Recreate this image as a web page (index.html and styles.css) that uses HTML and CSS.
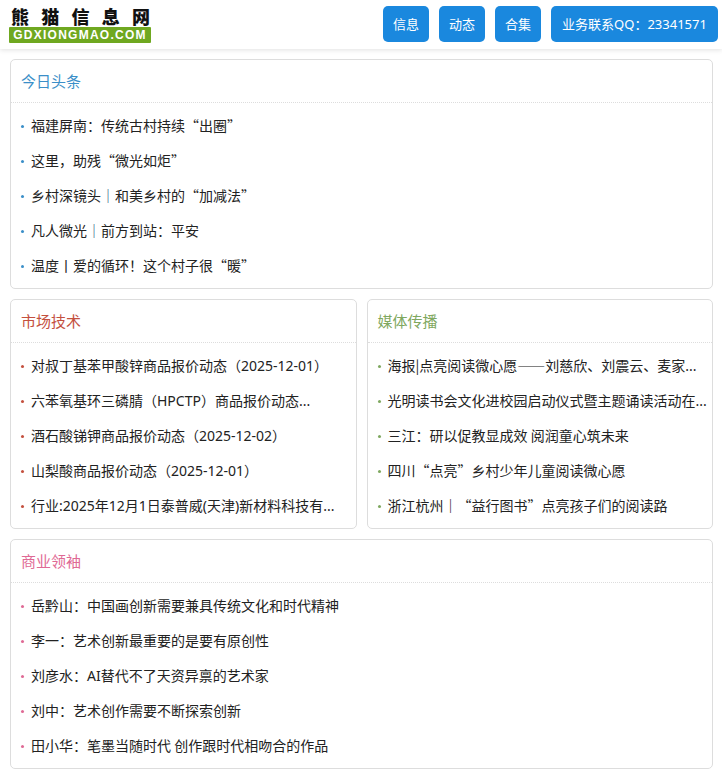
FILE: index.html
```html
<!DOCTYPE html>
<html lang="zh-CN">
<head>
<meta charset="utf-8">
<title>熊猫信息网</title>
<link rel="stylesheet" href="styles.css">
</head>
<body>
<header class="topbar">
  <a class="logo" href="#">
    <span class="logo-cn"><span>熊</span><span>猫</span><span>信</span><span>息</span><span>网</span></span>
    <span class="logo-en">GDXIONGMAO.COM</span>
  </a>
  <nav class="nav">
    <a class="btn" href="#">信息</a>
    <a class="btn" href="#">动态</a>
    <a class="btn" href="#">合集</a>
    <a class="btn btn-wide" href="#">业务联系<span class="la">QQ</span>：<span class="la">23341571</span></a>
  </nav>
</header>
<main class="page">
  <section class="card card-blue">
    <h2 class="card-title">今日头条</h2>
    <ul class="list">
      <li>福建屏南：传统古村持续“出圈”</li>
      <li>这里，助残“微光如炬”</li>
      <li>乡村深镜头<span class="bar">｜</span>和美乡村的“加减法”</li>
      <li>凡人微光<span class="bar">｜</span>前方到站：平安</li>
      <li>温度丨爱的循环！这个村子很“暖”</li>
    </ul>
  </section>
  <div class="row">
    <section class="card card-red">
      <h2 class="card-title">市场技术</h2>
      <ul class="list">
        <li>对叔丁基苯甲酸锌商品报价动态（<span class="la">2025-12-01</span>）</li>
        <li>六苯氧基环三磷腈（<span class="la">HPCTP</span>）商品报价动态<span class="la">...</span></li>
        <li>酒石酸锑钾商品报价动态（<span class="la">2025-12-02</span>）</li>
        <li>山梨酸商品报价动态（<span class="la">2025-12-01</span>）</li>
        <li>行业<span class="la">:2025</span>年<span class="la">12</span>月<span class="la">1</span>日泰普威<span class="la">(</span>天津<span class="la">)</span>新材料科技有<span class="la">...</span></li>
      </ul>
    </section>
    <section class="card card-green">
      <h2 class="card-title">媒体传播</h2>
      <ul class="list">
        <li>海报|点亮阅读微心愿——刘慈欣、刘震云、麦家<span class="la">...</span></li>
        <li>光明读书会文化进校园启动仪式暨主题诵读活动在<span class="la">...</span></li>
        <li>三江：研以促教显成效 阅润童心筑未来</li>
        <li>四川“点亮”乡村少年儿童阅读微心愿</li>
        <li>浙江杭州<span class="bar-dark">｜</span>“益行图书”点亮孩子们的阅读路</li>
      </ul>
    </section>
  </div>
  <section class="card card-pink">
    <h2 class="card-title">商业领袖</h2>
    <ul class="list">
      <li>岳黔山：中国画创新需要兼具传统文化和时代精神</li>
      <li>李一：艺术创新最重要的是要有原创性</li>
      <li>刘彦水：<span class="la">AI</span>替代不了天资异禀的艺术家</li>
      <li>刘中：艺术创作需要不断探索创新</li>
      <li>田小华：笔墨当随时代 创作跟时代相吻合的作品</li>
    </ul>
  </section>
</main>
</body>
</html>
```
FILE: styles.css
```css
* { box-sizing: border-box; }
html, body { margin: 0; padding: 0; }
body {
  background: #fff;
  color: #222;
  font-family: "Noto Sans CJK SC", "Noto Sans", sans-serif;
  font-size: 14px;
}
a { text-decoration: none; color: inherit; }
.la { font-family: "Noto Sans", sans-serif; }
.bar { color: #3f6f8e; font-weight: 900; }
.bar-dark { font-weight: 700; }
.topbar {
  height: 49px;
  display: flex;
  align-items: flex-start;
  justify-content: space-between;
  padding: 6px 4px 0 9px;
  box-shadow: 0 1px 5px rgba(0, 0, 0, .12);
}
.logo { display: flex; flex-direction: column; width: 142px; }
.logo-cn {
  display: flex;
  justify-content: space-between;
  height: 21px;
  padding: 0 1px 0 2px;
  font-size: 18px;
  font-weight: 900;
  line-height: 20px;
  color: #111;
}
.logo-en {
  height: 16px;
  background: #6fa820;
  border-radius: 1px;
  color: #fff;
  font-family: "Liberation Sans", sans-serif;
  font-size: 12px;
  font-weight: 700;
  line-height: 16px;
  letter-spacing: 1.25px;
  text-align: center;
  white-space: nowrap;
  overflow: hidden;
}
.nav { display: flex; gap: 10px; }
.btn {
  width: 46px;
  height: 36px;
  background: #1a88de;
  border-radius: 5px;
  color: #fff;
  font-size: 13px;
  line-height: 36px;
  text-align: center;
  white-space: nowrap;
}
.btn-wide { width: 167px; }
.page {
  display: flex;
  flex-direction: column;
  gap: 10px;
  padding: 10px 9px 0 10px;
}
.row { display: flex; gap: 10px; }
.row .card { flex: 1 1 0; min-width: 0; }
.card {
  height: 230px;
  border: 1px solid #ddd;
  border-radius: 5px;
  overflow: hidden;
}
.card-title {
  height: 43px;
  margin: 0;
  padding: 0 10px;
  border-bottom: 1px dotted #ddd;
  font-size: 15px;
  font-weight: 400;
  line-height: 41px;
}
.card-blue .card-title { color: #3b8fc8; }
.card-red .card-title { color: #c4503e; }
.card-green .card-title { color: #7fa860; }
.card-pink .card-title { color: #df6a95; }
.list { list-style: none; margin: 0; padding: 5px 0 0 9px; }
.list li {
  position: relative;
  height: 35px;
  padding: 0 5px 0 11px;
  line-height: 35px;
  white-space: nowrap;
  overflow: hidden;
}
.list li::before {
  content: "";
  position: absolute;
  left: 1px;
  top: 17px;
  width: 3px;
  height: 3px;
  border-radius: 50%;
}
.card-blue li::before { background: #3b8fc8; }
.card-red li::before { background: #c4503e; }
.card-green li::before { background: #7fa860; }
.card-pink li::before { background: #df6a95; }
```
